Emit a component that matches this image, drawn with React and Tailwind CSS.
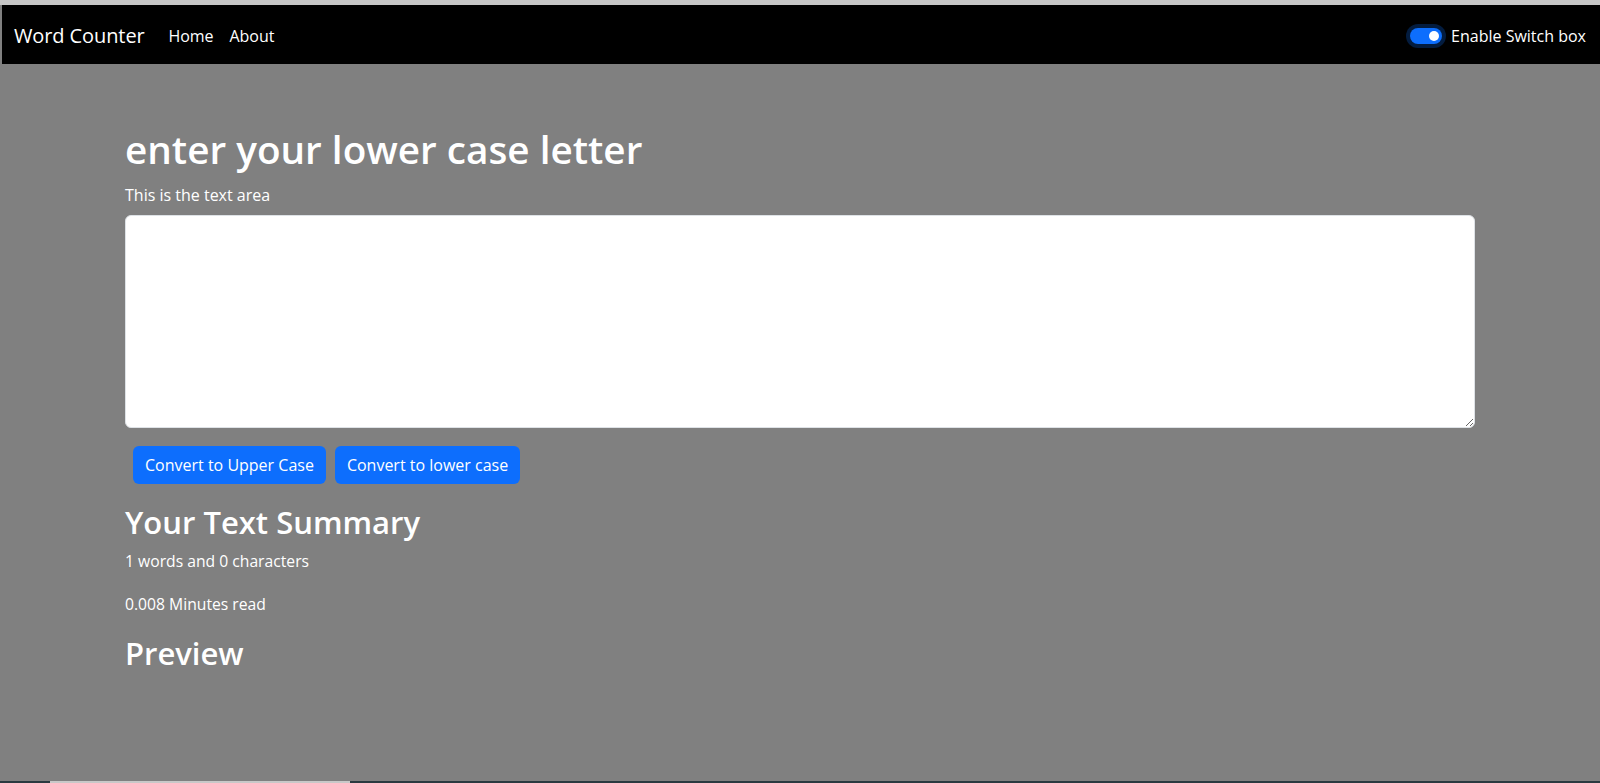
export default function App() {
  return (
    <div className="min-h-[783px] w-[1600px] bg-[#808080] flex flex-col text-white font-['Open_Sans','Noto_Sans',sans-serif]">
      <div className="h-[5px] bg-[#c6c6c6]" />
      <nav className="ml-[2px] h-[59px] bg-black flex items-center px-3 pt-[3px]">
        <span className="text-[20px] leading-[30px] text-white tracking-[-0.1px]">Word Counter</span>
        <span className="ml-[24px] text-[16px] text-white tracking-[-0.1px]">Home</span>
        <span className="ml-[16px] text-[16px] text-white">About</span>
        <div className="ml-auto flex items-center gap-[9px] pr-[2px]">
          <div className="w-[32px] h-[16px] rounded-full bg-[#0d6efd] shadow-[0_0_0_4px_rgba(13,110,253,0.25)] flex items-center justify-end pr-[3px]">
            <div className="w-[10px] h-[10px] rounded-full bg-white" />
          </div>
          <span className="text-[16px] text-white">Enable Switch box</span>
        </div>
      </nav>
      <main className="pl-[125px] pr-[125px] flex flex-col">
        <h1 className="mt-[61px] text-[38.7px] leading-[48px] font-semibold">enter your lower case letter</h1>
        <label className="mt-[10px] text-[16px] leading-[24px]">This is the text area</label>
        <textarea className="mt-[8px] h-[213px] w-full rounded-[6px] bg-white border border-[#dee2e6] resize-y" />
        <div className="mt-[18px] flex gap-[9px] pl-2">
          <button className="h-[38px] px-3 rounded-[6px] bg-[#0d6efd] text-white text-[16px]">Convert to Upper Case</button>
          <button className="h-[38px] px-3 rounded-[6px] bg-[#0d6efd] text-white text-[16px]">Convert to lower case</button>
        </div>
        <h2 className="mt-[19px] text-[31px] leading-[38px] font-semibold">Your Text Summary</h2>
        <p className="mt-[8px] text-[15.7px] leading-[24px]">1 words and 0 characters</p>
        <p className="mt-[19px] text-[15.7px] leading-[24px]">0.008 Minutes read</p>
        <h2 className="mt-[18px] text-[31px] leading-[38px] font-semibold">Preview</h2>
      </main>
      <div className="mt-auto h-[2px] bg-[#2a3a40] flex">
        <div className="ml-[50px] w-[300px] bg-[#c8c8c8]" />
      </div>
    </div>
  );
}
